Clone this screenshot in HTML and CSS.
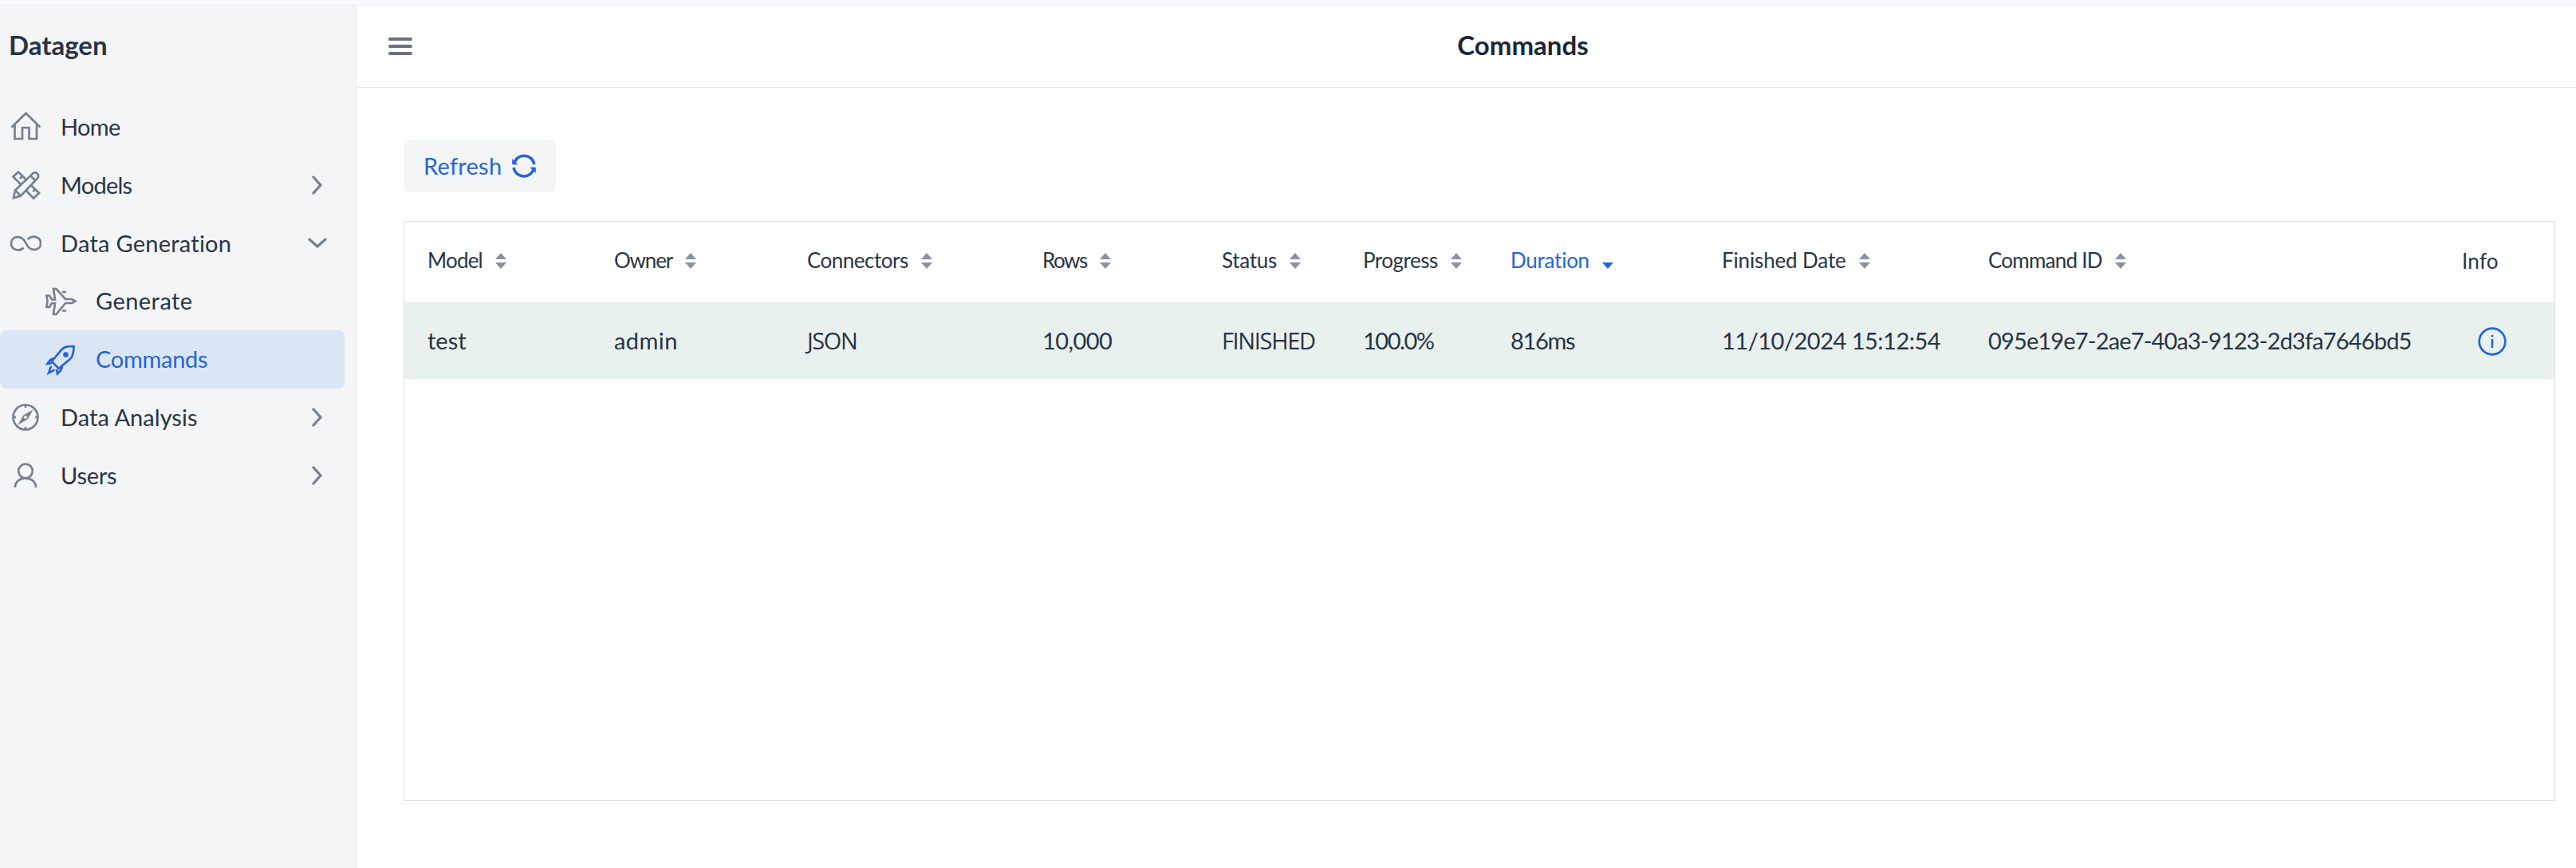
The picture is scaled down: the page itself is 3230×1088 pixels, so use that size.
FILE: index.html
```
<!DOCTYPE html>
<html lang="en">
<head>
<meta charset="utf-8">
<title>Datagen</title>
<link rel="stylesheet" href="styles.css">
</head>
<body>
<svg class="defs" width="0" height="0">
  <symbol id="chevron" viewBox="0 0 24 24"><path d="M7 2l9 10-9 10"/></symbol>
  <symbol id="sort" viewBox="0 0 14 20"><path d="M7 0l7 8H0zM7 20l7-8H0z"/></symbol>
</svg>
<div class="strip"></div>
<div class="app">
  <aside class="sidebar">
    <div class="brand ls-0">Datagen</div>
    <nav class="nav">
      <a class="item"><svg class="icon" viewBox="0 0 40 40"><path d="M2.500 20.500L20.500 3L38.500 20.500M6.500 17.500V35H16V21h8.500v14H34V17.500"/></svg><span class="ls-65">Home</span></a>
      <a class="item"><svg class="icon" viewBox="0 0 40 40"><path d="M15 20L4.500 9.500L11 3.500L21 13.500M26 19.500l11 10.500-7 6.500-9.500-10M12.500 12l3-2.500M29 28l3-2.500"/><path d="M5 36l2-9.500L29 5.500c5-3 9 2 6 6L14 33.500zM7 26.500l7 7M26.500 8.500l6 6"/></svg><span class="ls-75">Models</span><svg class="arrow"><use href="#chevron"/></svg></a>
      <a class="item"><svg class="icon" viewBox="0 0 40 40"><path d="M17.500 25.500C13 30.500 2 29 2 20S15 8 20.500 20S39 29 39 20S28 9.500 23 15"/></svg><span class="ls-p25">Data Generation</span><svg class="arrow down"><use href="#chevron"/></svg></a>
      <a class="item sub"><svg class="icon" viewBox="0 0 40 40"><path d="M11 4h3.500L26 17h8l4.500 2.500L34 22h-8L14.500 36H11l2-14H9L6 27H2.500l1-7.500-1-7H6l3 5h4zM22 8h5M22 31.500h5"/></svg><span class="ls-p45">Generate</span></a>
      <a class="item sub active"><svg class="icon" viewBox="0 0 40 40"><path d="M9 22L21 7.500C25 3 30 3 36.500 3c0 7-.5 12-4.500 16L17.500 31zM12.500 18.500c-5-.5-6.500 3-9 6.500L9 24M22 27.500c0 5-3 7-6 10L15 32M8 28l-3 8.500 7.500-4"/><circle class="solid" cx="26.500" cy="13.500" r="2"/></svg><span class="ls-30">Commands</span></a>
      <a class="item"><svg class="icon" viewBox="0 0 40 40"><circle cx="20" cy="20" r="15.500"/><path d="M20 5v3M20 32v3M5 20h3M32 20h3"/><path class="solid thin" fill-rule="evenodd" d="M29 11l-6.500 11.500L11 29l6.500-11.500zM20 17.800a2.200 2.200 0 100 4.400 2.200 2.200 0 000-4.400z"/></svg><span class="ls-p05">Data Analysis</span><svg class="arrow"><use href="#chevron"/></svg></a>
      <a class="item"><svg class="icon" viewBox="0 0 40 40"><circle cx="20" cy="14.500" r="8.800"/><path d="M7 35c0-15.500 26-15.500 26 0"/></svg><span class="ls-25">Users</span><svg class="arrow"><use href="#chevron"/></svg></a>
    </nav>
  </aside>
  <main class="main">
    <header class="header">
      <div class="toggle"><i></i><i></i><i></i></div>
      <h1 class="title">Commands</h1>
    </header>
    <section class="content">
      <button class="refresh"><span class="ls-p25">Refresh</span><svg class="reload" viewBox="0 0 30 30"><path d="M2.500 13C5-1.500 25-1.500 28 13M27.500 17C25 31.500 5 31.500 2 17"/><path class="solid thin" d="M.5 6.500V13H7zM29.500 23.500V17H23z"/></svg></button>
      <div class="grid">
        <div class="row head">
          <div><span class="ls-80">Model</span><svg class="sort"><use href="#sort"/></svg></div>
          <div><span class="ls-120">Owner</span><svg class="sort"><use href="#sort"/></svg></div>
          <div><span class="ls-50">Connectors</span><svg class="sort"><use href="#sort"/></svg></div>
          <div><span class="ls-145">Rows</span><svg class="sort"><use href="#sort"/></svg></div>
          <div><span class="ls-30">Status</span><svg class="sort"><use href="#sort"/></svg></div>
          <div><span class="ls-50">Progress</span><svg class="sort"><use href="#sort"/></svg></div>
          <div class="sorted"><span class="ls-25">Duration</span><svg class="sort" viewBox="0 0 14 20"><path d="M7 20l7-8H0z"/></svg></div>
          <div><span class="ls-15">Finished Date</span><svg class="sort"><use href="#sort"/></svg></div>
          <div><span class="ls-75">Command ID</span><svg class="sort"><use href="#sort"/></svg></div>
          <div class="info-head"><span class="ls-p25">Info</span></div>
        </div>
        <div class="row record">
          <div><span class="ls-0">test</span></div>
          <div><span class="ls-p45">admin</span></div>
          <div><span class="caps ls-145">JSON</span></div>
          <div><span class="ls-55">10,000</span></div>
          <div><span class="caps ls-135">FINISHED</span></div>
          <div><span class="ls-145">100.0%</span></div>
          <div><span class="ls-135">816ms</span></div>
          <div><span class="ls-50">11/10/2024 15:12:54</span></div>
          <div><span class="ls-85">095e19e7-2ae7-40a3-9123-2d3fa7646bd5</span></div>
          <div><svg class="info" viewBox="0 0 36 36"><circle cx="18" cy="18" r="16.300"/><path d="M18 15v11M18 10v2.500"/></svg></div>
        </div>
      </div>
    </section>
  </main>
</div>
</body>
</html>
```
FILE: styles.css
```
* { box-sizing: border-box; }
body {
  margin: 0;
  height: 1088px;
  overflow: hidden;
  display: flex;
  flex-direction: column;
  font: 400 29px/1.2 Lato, "Open Sans", sans-serif;
  font-kerning: normal;
  color: #283445;
  background: #fff;
}
.defs { position: absolute; }
.strip { height: 7px; background: #f8f9fc; border-bottom: 1px solid #ececf2; flex: none; }
.app { flex: 1; display: flex; min-height: 0; }

.sidebar { width: 447px; flex: none; background: #f3f5f7; border-right: 1px solid #e6e8eb; }
.brand { height: 116px; padding: 30px 0 0 11px; font-size: 33px; font-weight: 700; }
.item { display: flex; align-items: center; height: 72.8px; width: 432px; padding: 0 22px 0 12px; }
.item span { margin-left: 24px; }
.item.sub { padding-left: 56px; }
.active { background: #dbe6f5; border-radius: 8px; color: #2563dc; }
.icon { width: 40px; height: 40px; flex: none; fill: none; stroke: #76818f; stroke-width: 2.7; }
.active .icon { stroke: #2563dc; fill: none; }
.icon .solid { fill: #76818f; }
.active .icon .solid { fill: #2563dc; }
.icon .thin { stroke-width: .5; }
.arrow { width: 24px; height: 24px; margin-left: auto; fill: none; stroke: #76818f; stroke-width: 3.3; stroke-linecap: round; stroke-linejoin: round; }
.down { transform: rotate(90deg); }

.main { flex: 1; min-width: 0; display: flex; flex-direction: column; }
.header { height: 103px; flex: none; display: flex; align-items: center; padding-bottom: 3px; border-bottom: 1px solid #e6e8eb; }
.toggle { width: 142px; flex: none; padding: 3px 0 0 40px; display: flex; flex-direction: column; gap: 5px; }
.toggle i { width: 30px; height: 4px; border-radius: 2px; background: #69707f; }
.title { flex: 1; margin: 0; text-align: center; font-size: 33px; color: #1c2636; }

.content { flex: 1; padding: 65px 26px 84px 59px; display: flex; flex-direction: column; align-items: flex-start; }
.refresh { width: 191px; height: 66px; flex: none; display: flex; align-items: center; justify-content: space-between; padding: 0 25px 0 25px; border: 0; border-radius: 8px; background: #f3f5f7; font: inherit; color: #2563dc; }
.reload { width: 30px; height: 30px; fill: none; stroke: #2563dc; stroke-width: 3.5; }
.reload .solid { fill: #2563dc; stroke-width: .5; }

.grid { width: 100%; flex: 1; margin-top: 36px; border: 1px solid #dcdee0; }
.row { display: grid; grid-template-columns: 234px 242px 295px 225px 177px 185px 265px 334px 594px 1fr; }
.row > div { display: flex; align-items: center; padding-left: 29px; white-space: nowrap; }
.head { height: 101px; padding-bottom: 4px; font-size: 26px; }
.head .info-head { padding-top: 3px; }
.record { height: 96px; background: #e8f1ed; border-top: 1px solid #e3e8ec; }
.sort { width: 14px; height: 20px; margin-left: 16px; fill: #8a92a1; }
.sorted { color: #2563dc; }
.sorted .sort { fill: #2563dc; }
.info { width: 36px; height: 36px; margin-left: 20px; fill: none; stroke: #2563dc; stroke-width: 2.7; }
.caps { font-family: "Open Sans", sans-serif; }

/* letter spacing steps, in hundredths of a pixel; p is positive */
.ls-0 { letter-spacing: 0; }
.ls-15 { letter-spacing: -.15px; }
.ls-25 { letter-spacing: -.25px; }
.ls-30 { letter-spacing: -.3px; }
.ls-50 { letter-spacing: -.5px; }
.ls-55 { letter-spacing: -.55px; }
.ls-65 { letter-spacing: -.65px; }
.ls-75 { letter-spacing: -.75px; }
.ls-80 { letter-spacing: -.8px; }
.ls-85 { letter-spacing: -.85px; }
.ls-120 { letter-spacing: -1.2px; }
.ls-135 { letter-spacing: -1.35px; }
.ls-145 { letter-spacing: -1.45px; }
.ls-p05 { letter-spacing: .05px; }
.ls-p25 { letter-spacing: .25px; }
.ls-p45 { letter-spacing: .45px; }
```
